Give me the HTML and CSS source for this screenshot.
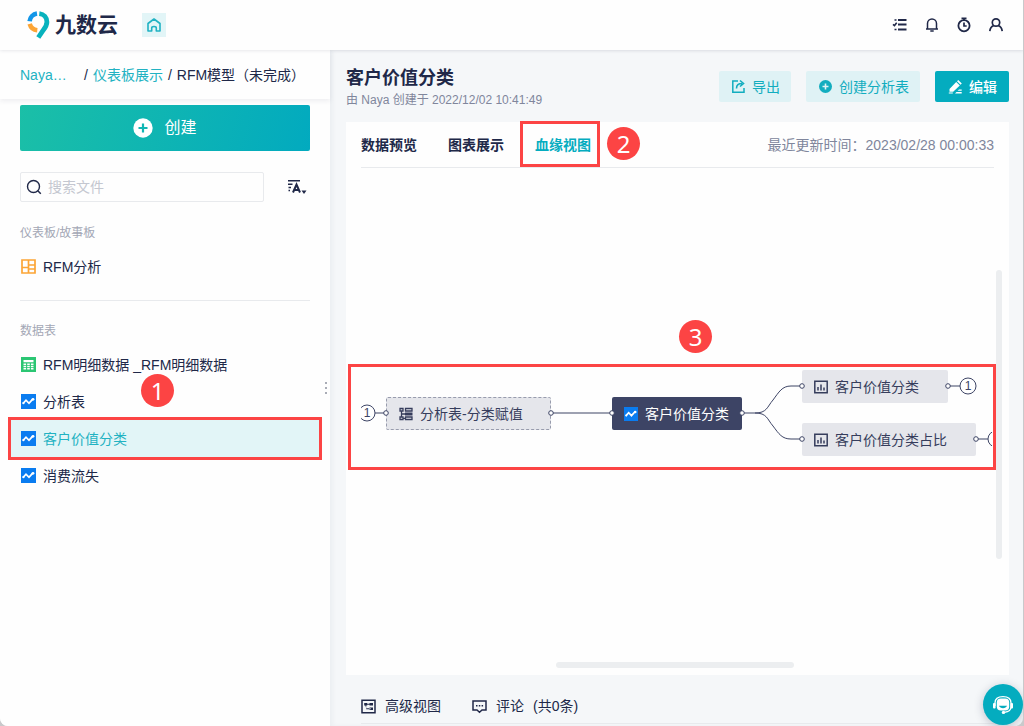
FILE: index.html
```html
<!DOCTYPE html>
<html lang="zh-CN">
<head>
<meta charset="utf-8">
<title>九数云 - 客户价值分类</title>
<link rel="stylesheet" href="styles.css">
</head>
<body>
<svg class="defs" aria-hidden="true">
  <symbol id="i-wave" viewBox="0 0 15 15"><rect width="15" height="15" fill="#0a7cf0"/><path d="M2 9.500 5 6.200 8 9.300 11.500 5.400" fill="none" stroke="#fff" stroke-width="1.800"/><circle cx="2.400" cy="9.200" r="1.100" fill="#fff"/><circle cx="12" cy="5.300" r="1.400" fill="#fff"/></symbol>
  <symbol id="i-chart" viewBox="0 0 14 13"><path d="M.8.8h12.400v11.400H.8zM4 10V6.500M7 10V4M10 10V7" fill="none" stroke="currentColor" stroke-width="1.500"/></symbol>
</svg>
<div class="app">
  <header class="topbar">
    <div class="brand">
      <svg class="brand-mark" viewBox="0 0 23 28" aria-hidden="true">
        <path d="M2.600 10.200A8.800 8.800 0 0 1 10 2.600" fill="none" stroke="#1296e8" stroke-width="4.600"/>
        <path d="M2.700 12.800A8.800 8.800 0 0 0 10.300 19.200" fill="none" stroke="#fca536" stroke-width="4.600"/>
        <path d="M12.300 2.600C17 3.100 19.900 6.800 19.900 11c0 3.200-1.700 5.700-3.500 8L11.300 26.500" fill="none" stroke="#08b2bd" stroke-width="4.800"/>
      </svg>
      <span class="brand-name">九数云</span>
    </div>
    <button class="home" aria-label="首页"><svg width="14" height="14" viewBox="0 0 14 14"><path d="M1 5.500 7 1l6 4.500V13H9.300V10a2.300 1.500 0 0 0-4.600 0V13H1z" fill="none" stroke="currentColor" stroke-width="1.600" stroke-linejoin="round"/></svg></button>
    <nav class="tools" aria-label="工具">
      <button aria-label="任务"><svg viewBox="0 0 16 16"><path d="M6 3h8.500M6 7.500h8.500M6 12.500h8.500" stroke="currentColor" stroke-width="1.800"/><path d="M2.500 3h2M2.500 12.500h2M1 7.300l1.500 1.300L4.700 5.800" fill="none" stroke="currentColor" stroke-width="1.600"/></svg></button>
      <button aria-label="通知"><svg viewBox="0 0 16 16"><path d="M2 12h12M3.500 12V6.500a4.500 4.500 0 0 1 9 0V12M6.300 14h3.400" fill="none" stroke="currentColor" stroke-width="1.500"/></svg></button>
      <button aria-label="计时"><svg viewBox="0 0 16 16"><circle cx="8" cy="8.700" r="5.600" fill="none" stroke="currentColor" stroke-width="1.800"/><path d="M5.500 1.300h5M8 1.500v2M8 5.500V9h2.700" fill="none" stroke="currentColor" stroke-width="1.700"/></svg></button>
      <button aria-label="账户"><svg viewBox="0 0 16 16"><circle cx="8" cy="5.500" r="3.700" fill="none" stroke="currentColor" stroke-width="1.700"/><path d="M1.800 14.200c.3-3 1.800-5 4.200-5.700M14.200 14.200c-.3-3-1.800-5-4.200-5.700" fill="none" stroke="currentColor" stroke-width="1.700"/></svg></button>
    </nav>
  </header>

  <div class="body">
    <aside class="sidebar">
      <nav class="crumbs" aria-label="路径">
        <a class="crumb-root" href="#">Naya…</a><span>/</span><a href="#">仪表板展示</a><span>/</span><span>RFM模型（未完成）</span>
      </nav>
      <button class="create">
        <svg width="20" height="20" viewBox="0 0 20 20" aria-hidden="true"><circle cx="10" cy="10" r="9.700" fill="#fff"/><path d="M10 5.500v9M5.500 10h9" stroke="#10b6b4" stroke-width="2.200"/></svg>
        创建
      </button>
      <div class="search-row">
        <label class="search">
          <svg width="16" height="16" viewBox="0 0 16 16" aria-hidden="true"><circle cx="7.500" cy="7.500" r="6" fill="none" stroke="currentColor" stroke-width="1.400"/><path d="m11.800 11.800 3 3" stroke="currentColor" stroke-width="1.500"/></svg>
          <input type="text" placeholder="搜索文件" aria-label="搜索文件">
        </label>
        <button class="sort" aria-label="排序"><svg width="20" height="16" viewBox="0 0 20 16"><path d="M1 1.800h12M1 5.200h4.500M1.500 8.500h2.500M1.500 11.500h1.500" stroke="currentColor" stroke-width="1.600"/><path d="M6 13.500 9.500 5.500 13 13.500M7.300 11h4.400" fill="none" stroke="currentColor" stroke-width="2"/><path d="M14.500 11.500h5L17 15z" fill="currentColor"/></svg></button>
      </div>
      <section class="group">
        <h2>仪表板/故事板</h2>
        <a class="file" href="#"><svg viewBox="0 0 15 15" aria-hidden="true"><path d="M1 1h13v13H1zM7.500 1v13M1 8.500h6.500M7.500 6h6.500M7.500 10h6.500" fill="none" stroke="#fca536" stroke-width="1.700"/></svg>RFM分析</a>
      </section>
      <hr>
      <section class="group">
        <h2>数据表</h2>
        <a class="file" href="#"><svg viewBox="0 0 15 15" aria-hidden="true"><rect width="15" height="15" fill="#2bc673"/><path d="M2.500 3h10v2.300h-10zM2.500 6.500h2.600v1.500H2.500zM6.200 6.500h2.600v1.500H6.200zM9.900 6.500h2.600v1.500H9.900zM2.500 8.800h2.600v1.500H2.500zM6.200 8.800h2.600v1.500H6.200zM9.900 8.800h2.600v1.500H9.900zM2.500 11.100h2.600v1.400H2.500zM6.200 11.100h2.600v1.400H6.200zM9.900 11.100h2.600v1.400H9.900z" fill="#fff"/></svg>RFM明细数据 _RFM明细数据</a>
        <a class="file" href="#"><svg aria-hidden="true"><use href="#i-wave"/></svg>分析表</a>
        <a class="file selected" href="#" aria-current="page"><svg aria-hidden="true"><use href="#i-wave"/></svg>客户价值分类<span class="frame"></span><span class="step step-1">1</span></a>
        <a class="file" href="#"><svg aria-hidden="true"><use href="#i-wave"/></svg>消费流失</a>
      </section>
      <div class="grip"><i></i><i></i><i></i></div>
    </aside>

    <main class="main">
      <div class="heading">
        <div>
          <h1>客户价值分类</h1>
          <p>由 Naya 创建于 2022/12/02 10:41:49</p>
        </div>
        <div class="actions">
          <button class="btn"><svg viewBox="0 0 15 15" aria-hidden="true"><path d="M7 2H1.800v11.200H13V9" fill="none" stroke="currentColor" stroke-width="1.500"/><path d="M5.500 9.500C5.500 6 7.500 4.500 11 4.500M9 1.500l3.500 3L9 7.500" fill="none" stroke="currentColor" stroke-width="1.600"/></svg>导出</button>
          <button class="btn"><svg viewBox="0 0 15 15" aria-hidden="true"><circle cx="7.500" cy="7.500" r="6.500" fill="currentColor"/><path d="M7.500 4.500v6M4.500 7.500h6" stroke="#dff2f5" stroke-width="1.600"/></svg>创建分析表</button>
          <button class="btn primary"><svg viewBox="0 0 15 15" aria-hidden="true"><path d="M1.500 10 8.200 3l3.600 3.500-6.600 6.300H1.500zM9 2.200l1.200-1.200 3.600 3.500-1.200 1.200zM.8 13.400h4v1.200h-4zM8.500 13h5.200v1.400H7zM11 10.400h2.700v1.400H9.600z" fill="currentColor"/></svg>编辑</button>
        </div>
      </div>

      <section class="panel">
        <div class="tabs">
          <button class="tab">数据预览</button>
          <button class="tab">图表展示</button>
          <button class="tab active">血缘视图<span class="frame"></span><span class="step step-2">2</span></button>
          <span class="updated">最近更新时间：2023/02/28 00:00:33</span>
        </div>
        <div class="stage">
          <div class="canvas">
            <div class="node node-source"><svg viewBox="0 0 14 14" aria-hidden="true"><path d="M1 1.500h3v2.500H1zM1 10h3v2.500H1zM6.500 1.500h6.500v2.500H6.500zM6.500 10H13v2.500H6.500zM2.500 4v6M4 11.300h2.500M2.500 7H6" fill="none" stroke="currentColor" stroke-width="1.300"/><path d="M6 5.500h7.500v3H6z" fill="currentColor"/></svg>分析表-分类赋值</div>
            <div class="node node-current"><svg aria-hidden="true"><use href="#i-wave"/></svg>客户价值分类</div>
            <div class="node node-chart"><svg aria-hidden="true"><use href="#i-chart"/></svg>客户价值分类</div>
            <div class="node node-share"><svg aria-hidden="true"><use href="#i-chart"/></svg>客户价值分类占比</div>
            <svg class="links" width="631" height="300" aria-hidden="true">
              <path d="M14 245h11M190 245h61M380 245h14c12 0 12-6 18-13 6-8 9-14 18-14h11M394 245c12 0 12 6 18 13 6 8 9 13 18 13h11M586 218h13M615 271h12"/>
              <g class="ports"><circle cx="25" cy="245" r="2.300"/><circle cx="190" cy="245" r="2.300"/><circle cx="251" cy="245" r="2.300"/><circle cx="381" cy="245" r="2.300"/><circle cx="441" cy="218" r="2.300"/><circle cx="441" cy="271" r="2.300"/><circle cx="587" cy="218" r="2.300"/><circle cx="615" cy="271" r="2.300"/>
              <circle cx="6" cy="245" r="8"/><circle cx="607" cy="218" r="8"/><circle cx="635" cy="271" r="8"/></g>
              <text x="6" y="249">1</text><text x="607" y="222">1</text>
            </svg>
          </div>
          <span class="frame frame-graph"></span>
          <span class="step step-3">3</span>
          <span class="bar bar-v"></span>
          <span class="bar bar-h"></span>
        </div>
      </section>

      <footer class="footer">
        <button><svg viewBox="0 0 15 15" aria-hidden="true"><path d="M1 1.200h13v12.600H1z" fill="none" stroke="currentColor" stroke-width="1.500"/><path d="M3.200 4h3v2.500h-3zM8.500 4H12v2.500H8.500zM8.500 8.500H12V11H8.500zM6 4.800h3v1H6zM4.200 6h1v4.300h4.500v-1H5.200z" fill="currentColor"/></svg>高级视图</button>
        <button><svg viewBox="0 0 15 15" aria-hidden="true"><path d="M1 2h13v9H10l-2.500 2.200L5 11H1z" fill="none" stroke="currentColor" stroke-width="1.500"/><path d="M4 6h1.500v1.500H4zM6.800 6h1.500v1.500H6.800zM9.600 6h1.500v1.500H9.600z" fill="currentColor"/></svg>评论<span>(共0条)</span></button>
      </footer>
      <button class="support" aria-label="客服"><svg width="22" height="20" viewBox="0 0 22 20"><path d="M3 11V8C3 4 6 1.700 11 1.700S19 4 19 8v4c0 3-2 4.800-6.500 5.300" fill="none" stroke="#fff" stroke-width="1.300"/><rect x="4.800" y="3.400" width="12.400" height="12" rx="4" fill="#fff"/><path d="M7 10.800h8c-1 3.200-7 3.200-8 0z" fill="#04acbf"/><rect x="1" y="8" width="2.600" height="5.500" rx="1" fill="#fff"/><rect x="18.400" y="8" width="2.600" height="5.500" rx="1" fill="#fff"/><circle cx="11.500" cy="17.400" r="1.700" fill="#fff"/></svg></button>
    </main>
  </div>
</div>
</body>
</html>
```
FILE: styles.css
```css
:root {
  --ink: #202848;
  --teal: #04acbf;
  --muted: #80869c;
  --line: #e8eaed;
  --red: #fc4444;
}
* { box-sizing: border-box; }
body {
  margin: 0;
  background: #c9c9cb;
  color: var(--ink);
  font: 14px/20px "Liberation Sans", "Noto Sans CJK SC", sans-serif;
}
a { color: inherit; text-decoration: none; }
button {
  padding: 0;
  border: 0;
  background: none;
  color: inherit;
  font: inherit;
  cursor: pointer;
}
h1, h2, p { margin: 0; }
svg { flex: none; }
.defs { position: absolute; width: 0; height: 0; }

.app {
  display: flex;
  flex-direction: column;
  min-height: 100vh;
  margin-right: 1px;
  overflow: hidden;
  border-radius: 0 0 8px 8px;
  background: #f5f7f9;
}

/* Top bar */
.topbar {
  display: flex;
  align-items: center;
  height: 50px;
  padding: 0 19px 0 27px;
  background: #fefefe;
  box-shadow: 0 0 4px rgba(32, 40, 72, .16);
  z-index: 1;
}
.brand { display: flex; align-items: center; gap: 5px; }
.brand-mark { width: 23px; height: 28px; }
.brand-name { font-size: 21px; font-weight: 700; line-height: 28px; }
.home {
  display: grid;
  place-items: center;
  width: 24px;
  height: 24px;
  margin-left: 24px;
  background: #e2f5f7;
  color: #20b2c3;
}
.tools { display: flex; gap: 16px; margin-left: auto; }
.tools button { display: grid; }
.tools svg { width: 16px; height: 16px; }

.body { display: flex; flex: 1; }

/* Sidebar */
.sidebar {
  position: relative;
  width: 330px;
  flex: none;
  background: #fefefe;
}
.crumbs {
  display: flex;
  align-items: center;
  gap: 5px;
  height: 49px;
  padding-left: 20px;
  box-shadow: 0 2px 5px rgba(32, 40, 72, .08);
  white-space: nowrap;
}
.crumbs a { color: #22b2c2; }
.crumbs .crumb-root { width: 59px; }
.create {
  display: flex;
  align-items: center;
  justify-content: center;
  gap: 11px;
  width: 290px;
  height: 46px;
  margin: 6px 20px 0;
  border-radius: 2px;
  background: linear-gradient(105deg, #1bbfa7, #02aabf);
  color: #fff;
  font-size: 16px;
}
.search-row { display: flex; align-items: center; gap: 23px; margin: 21px 20px 0; }
.search {
  display: flex;
  align-items: center;
  gap: 6px;
  width: 244px;
  height: 30px;
  padding: 0 5px;
  border: 1px solid var(--line);
  border-radius: 2px;
}
.search input {
  min-width: 0;
  flex: 1;
  padding: 0;
  border: 0;
  outline: 0;
  background: none;
  font: inherit;
}
.search input::placeholder { color: #c4c7d0; opacity: 1; }
.sort { display: grid; }
.group { padding: 0 11px 0 10px; }
.group h2 {
  margin-bottom: 5px;
  padding-left: 10px;
  color: #a3a7b5;
  font-size: 12px;
  font-weight: 400;
  line-height: 20px;
}
.search-row + .group { margin-top: 21px; }
.file {
  position: relative;
  display: flex;
  align-items: center;
  gap: 7px;
  height: 37px;
  padding-left: 11px;
}
.file svg { width: 15px; height: 15px; }
.selected { background: #e2f5f7; color: #22b2c2; }
.sidebar hr { margin: 15px 20px 20px; border: 0; border-top: 1px solid var(--line); }
.grip {
  position: absolute;
  top: 332px;
  right: 3px;
  display: grid;
  gap: 3px;
}
.grip i { width: 2px; height: 2px; background: #a9acb6; }

/* Callouts */
.frame { position: absolute; border: 2px solid var(--red); pointer-events: none; }
.step {
  position: absolute;
  display: grid;
  place-items: center;
  width: 33px;
  height: 33px;
  border-radius: 50%;
  background: var(--red);
  color: #fff;
  font: 24px/33px "Noto Sans", sans-serif;
}
.selected .frame { inset: -3px -3px -3px -2px; border-width: 3px; }
.step-1 { left: 131px; top: -46px; }
.tab .frame { inset: -1px -9px 0 -15px; border-width: 3px; }
.step-2 { left: 72px; top: 5px; }

/* Main */
.main {
  position: relative;
  display: flex;
  flex-direction: column;
  flex: 1;
  min-width: 0;
  padding: 0 14px 0 16px;
  box-shadow: inset 3px 0 4px rgba(32, 40, 72, .04);
}
.heading { display: flex; justify-content: space-between; padding: 16px 0 12px; }
h1 { font-size: 18px; line-height: 24px; }
.heading p { color: var(--muted); font-size: 12px; line-height: 20px; }
.actions { display: flex; gap: 15px; margin-top: 5px; }
.btn {
  display: flex;
  align-items: center;
  gap: 6px;
  height: 31px;
  padding: 0 11px 0 12px;
  border-radius: 2px;
  background: #dff2f5;
  color: #12adbf;
}
.btn svg { width: 15px; height: 15px; }
.btn.primary { padding: 0 12px 0 13px; background: var(--teal); color: #fff; font-weight: 500; }
.panel { display: flex; flex: 1; flex-direction: column; background: #fefefe; }
.tabs {
  display: flex;
  gap: 31px;
  height: 46px;
  margin: 0 15px;
  border-bottom: 1px solid var(--line);
}
.tab { position: relative; font-weight: 700; }
.tab.active { color: var(--teal); }
.updated { margin-left: auto; color: var(--muted); line-height: 47px; }
.stage { position: relative; flex: 1; min-height: 506px; }
.canvas { position: absolute; inset: 0 17px 0 15px; overflow: hidden; }
.node {
  position: absolute;
  display: flex;
  align-items: center;
  gap: 7px;
  height: 33px;
  padding-left: 12px;
  border-radius: 2px;
  background: #e5e6eb;
  color: #363d5c;
  line-height: 18px;
  white-space: nowrap;
}
.node svg { width: 14px; height: 14px; }
.node-source { left: 25px; top: 229px; width: 165px; border: 1px dashed #989cad; }
.node-current { left: 251px; top: 229px; width: 130px; background: #3d4465; color: #fff; }
.node-chart { left: 441px; top: 202px; width: 146px; }
.node-share { left: 441px; top: 255px; width: 174px; }
.links { position: absolute; left: 0; top: 0; }
.links path { fill: none; stroke: #3d4465; }
.ports { fill: #fff; stroke: #3d4465; }
.links text { fill: #3d4465; font-size: 12px; text-anchor: middle; }
.frame-graph { inset: 196px 13px auto 2px; height: 106px; border-width: 3px; }
.step-3 { left: 333px; top: 152px; }
.bar { position: absolute; border-radius: 3px; background: #eceef0; }
.bar-v { top: 102px; right: 7px; width: 6px; height: 289px; }
.bar-h { left: 210px; bottom: 7px; width: 238px; height: 6px; }
.footer {
  display: flex;
  gap: 31px;
  margin: 0 0 2px 15px;
  padding: 21px 0 7px;
  border-bottom: 1px solid var(--line);
}
.footer button { display: flex; align-items: center; gap: 9px; }
.footer svg { width: 15px; height: 15px; }
.support {
  position: absolute;
  right: 0;
  bottom: 1px;
  display: grid;
  place-items: center;
  width: 40px;
  height: 41px;
  border-radius: 50%;
  background: var(--teal);
  box-shadow: 0 2px 10px rgba(32, 40, 72, .25);
}
```
